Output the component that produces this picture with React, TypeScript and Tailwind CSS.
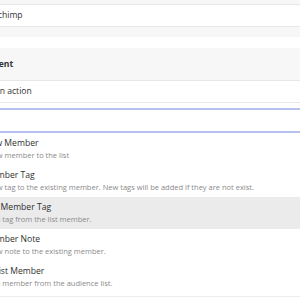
const actions = [
  { title: "Add New Member", desc: "Add a new member to the list" },
  { title: "Add Member Tag", desc: "Add a new tag to the existing member. New tags will be added if they are not exist." },
  { title: "Remove Member Tag", desc: "Remove a tag from the list member." },
  { title: "Add Member Note", desc: "Add a new note to the existing member." },
  { title: "Delete List Member", desc: "Remove a member from the audience list." },
];

export default function App() {
  return (
    <div className="w-[300px] h-[300px] overflow-hidden bg-white font-['Open_Sans',sans-serif]">
      <div className="ml-[-34px] w-[400px]">
        <div className="h-[5px] bg-[#f7f7f7] border-b border-[#e8e8e8]" />
        <div className="h-[22px] flex items-center pl-[15px] text-[8.6px] text-[#333] border-b border-[#e8e8e8]">
          Mailchimp
        </div>
        <div className="h-[10px] bg-[#f7f7f7]" />
        <div className="h-[11px]" />
        <div className="h-[33px] flex items-center pl-[23px] bg-[#f7f7f7] border-b border-[#e8e8e8] text-[8.6px] font-bold text-[#333]">
          Event
        </div>
        <div className="h-[22px] flex items-center pl-[3px] text-[8.6px] text-[#333] border-b border-[#e8e8e8]">
          Select an action
        </div>
        <div className="h-[5px]" />
        <div className="h-[25px] border-y-2 border-[#b7c1ef]" />
        <div className="flex flex-col">
          {actions.map((a, i) => (
            <div key={a.title} className={`h-[32px] pt-[4px] ${i === 2 ? "bg-[#ebebeb]" : ""}`}>
              <div className="text-[8.6px] leading-[12px] text-[#2f2f2f]">{a.title}</div>
              <div className="mt-[1px] text-[7.5px] leading-[11px] text-[#8a8a8a]">{a.desc}</div>
            </div>
          ))}
        </div>
        <div className="h-[4px] border-b border-[#ececec]" />
      </div>
    </div>
  );
}
